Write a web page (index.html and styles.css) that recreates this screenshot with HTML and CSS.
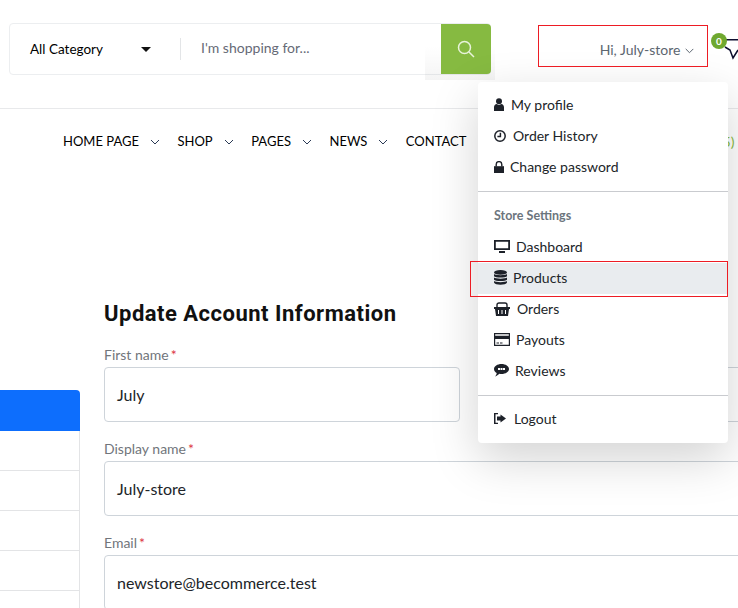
FILE: index.html
```html
<!DOCTYPE html>
<html lang="en">
<head>
<title>Update Account Information</title>
<meta charset="utf-8">
<link rel="stylesheet" href="styles.css">
</head>
<body>

<header class="topbar">
	<form class="search">
		<div class="search-cat"><span>All Category</span><i class="caret"></i></div>
		<div class="search-text">I'm shopping for...</div>
		<div class="search-shade"></div>
		<button class="search-btn" type="button">
			<svg width="18" height="18" viewBox="0 0 18 18" fill="none" stroke="#e8f3da" stroke-width="1.5"><circle cx="7.5" cy="7.5" r="6"/><path d="M12 12l5 5"/></svg>
		</button>
	</form>
	<div class="account">
		<a class="hi" href="#">Hi, July-store
			<svg width="9" height="6" viewBox="0 0 9 6" fill="none" stroke="#5c6670"><path d="M.7.9l3.800 3.800L8.300.9"/></svg>
		</a>
		<div class="cart">
			<svg width="26" height="26" viewBox="0 0 26 26" fill="none" stroke="#0d0d2e" stroke-width="1.5"><path d="M7 .8h19M6 8l5 3 3 8 5-8"/></svg>
			<span class="cart-count">0</span>
		</div>
	</div>
</header>

<nav class="mainnav">
	<a href="#">HOME PAGE<svg class="chev" width="10" height="6" viewBox="0 0 10 6"><path d="M1 1l4 4 4-4"/></svg></a>
	<a href="#">SHOP<svg class="chev" width="10" height="6" viewBox="0 0 10 6"><path d="M1 1l4 4 4-4"/></svg></a>
	<a href="#">PAGES<svg class="chev" width="10" height="6" viewBox="0 0 10 6"><path d="M1 1l4 4 4-4"/></svg></a>
	<a href="#">NEWS<svg class="chev" width="10" height="6" viewBox="0 0 10 6"><path d="M1 1l4 4 4-4"/></svg></a>
	<a href="#">CONTACT</a>
	<span class="hotline">(5) $0.00</span>
</nav>

<main class="content">
	<aside class="sidebar">
		<div class="side-active"></div>
		<div class="side-row"></div>
		<div class="side-row"></div>
		<div class="side-row"></div>
		<div class="side-row"></div>
		<div class="side-row"></div>
	</aside>
	<section class="account-form">
		<h1>Update Account Information</h1>
		<div class="field-row">
			<div class="field short">
				<label>First name<em>*</em></label>
				<div class="input">July</div>
			</div>
			<div class="field">
				<label></label>
				<div class="input"></div>
			</div>
		</div>
		<div class="field">
			<label>Display name<em>*</em></label>
			<div class="input">July-store</div>
		</div>
		<div class="field">
			<label>Email<em>*</em></label>
			<div class="input">newstore@becommerce.test</div>
		</div>
	</section>
</main>

<div class="menu">
	<div class="menu-group">
		<a href="#"><svg width="10" height="13" viewBox="0 0 10 13" fill="#1d2129"><circle cx="5" cy="3.200" r="3"/><path d="M0 13V9.200C0 7.500 1.300 6.400 2.600 6.100 4 7.200 6 7.200 7.400 6.100 8.700 6.400 10 7.500 10 9.200V13z"/></svg>My profile</a>
		<a href="#"><svg width="12" height="12" viewBox="0 0 12 12" fill="none" stroke="#1d2129" stroke-width="1.500"><circle cx="6" cy="6" r="5.200"/><path d="M6.400 2.800v3.600H3.400"/></svg>Order History</a>
		<a href="#" class="gap-s"><svg width="10" height="12" viewBox="0 0 10 12" fill="#1d2129"><path d="M0 5.200h10V12H0z"/><path d="M2.200 5.500V3.400a2.800 2.800 0 015.600 0v2.100" fill="none" stroke="#1d2129" stroke-width="1.400"/></svg>Change password</a>
	</div>
	<div class="menu-group">
		<div class="menu-title">Store Settings</div>
		<a href="#" class="gap-s"><svg width="16" height="13" viewBox="0 0 16 13" fill="#1d2129"><path d="M0 0h16v10H0zM1.800 1.800v6.400h12.400V1.800zM5 11h6v2H5z" fill-rule="evenodd"/></svg>Dashboard</a>
		<a href="#" class="on gap-s"><svg width="13" height="15" viewBox="0 0 13 15" fill="#1d2129"><ellipse cx="6.500" cy="2.400" rx="6.500" ry="2.400"/><path d="M0 4c1 1.500 12 1.500 13 0v2.200C12 8 1 8 0 6.200zM0 7.500c1 1.500 12 1.500 13 0v2.200c-1 1.800-12 1.800-13 0zM0 11c1 1.500 12 1.500 13 0v1.600C12 15.500 1 15.500 0 12.600z"/></svg>Products</a>
		<a href="#"><svg width="16" height="14" viewBox="0 0 16 14" fill="#1d2129"><path d="M0 5h16v2h-1l-1 7H2L1 7H0zM4 8v4h1V8zm3.500 0v4h1V8zM11 8v4h1V8z" fill-rule="evenodd"/><path d="M3 5.500V3a2 2 0 012-2h6a2 2 0 012 2v2.500" fill="none" stroke="#1d2129" stroke-width="1.400"/></svg>Orders</a>
		<a href="#" class="gap-s"><svg width="16" height="13" viewBox="0 0 16 13" fill="#1d2129"><path d="M0 0h16v13H0zM1.200 1.200v1.600h13.600V1.200zM1.200 6v5.800h13.600V6zM2.500 9.500h2.500v1H2.500zM6 9.500h2.500v1H6z" fill-rule="evenodd"/></svg>Payouts</a>
		<a href="#" class="gap-s"><svg width="15" height="13" viewBox="0 0 15 13" fill="#1d2129"><path fill-rule="evenodd" d="M7.500 0C11.600 0 15 2.200 15 5s-3.400 5-7.500 5c-.8 0-1.500-.1-2.200-.2C4.300 11 2.800 12 1 12.500 2 11.500 2.600 10.300 2.700 9 1 8 0 6.600 0 5 0 2.200 3.400 0 7.500 0zM4 4v2h2V4zm2.500 0v2h2V4zM9 4v2h2V4z"/></svg>Reviews</a>
	</div>
	<div class="menu-group last">
		<a href="#" class="gap-l"><svg width="12" height="11" viewBox="0 0 12 11" fill="#1d2129"><path d="M4 0v1.300H1.500v8.400H4V11H0V0z"/><path d="M6.500 1.500L12 5.500l-5.500 4V7.500H3v-4h3.500z"/></svg>Logout</a>
	</div>
</div>

<div class="marker marker-hi"></div>
<div class="marker marker-products"></div>

</body>
</html>
```

FILE: styles.css
```css
html, body {
	margin: 0;
	padding: 0;
}

body {
	position: relative;
	width: 738px;
	height: 608px;
	overflow: hidden;
	background-color: #fff;
	font-family: Lato, sans-serif;
	color: #1d2129;
}

a {
	color: inherit;
	text-decoration: none;
}

.topbar {
	display: flex;
	height: 109px;
	box-sizing: border-box;
	padding: 23px 0 0 9px;
	border-bottom: 1px solid #e8e9eb;
}

.search {
	position: relative;
	display: flex;
	flex-shrink: 0;
	width: 482px;
	height: 52px;
	box-sizing: border-box;
	border: 1px solid #eceef0;
	border-radius: 4px;
	margin: 0;
}

.search-cat {
	display: flex;
	align-items: center;
	justify-content: space-between;
	width: 170px;
	box-sizing: border-box;
	padding: 0 29px 1px 20px;
	font-size: 13.500px;
	color: #000;
}

.caret {
	width: 0;
	height: 0;
	border: 5px solid transparent;
	border-top: 5px solid #111;
	border-bottom: 0;
	margin-top: 2px;
}

.search-text {
	flex: 1;
	align-self: center;
	height: 22px;
	line-height: 20px;
	padding-left: 20px;
	border-left: 1px solid #e3e5e7;
	font-size: 14px;
	color: #666a76;
}

/* grey patch the dropdown shadow leaves round the button */
.search-shade {
	position: absolute;
	top: -1px;
	left: 415px;
	width: 70px;
	height: 57px;
	background: linear-gradient(rgba(0, 0, 0, 0) 40%, rgba(0, 0, 0, .045));
}

.search-btn {
	position: relative;
	display: flex;
	align-items: center;
	justify-content: center;
	width: 50px;
	margin: 0 -1px 0 0;
	padding: 0;
	border: 0;
	border-radius: 0 4px 4px 0;
	background-color: #86ba41;
}

.account {
	display: flex;
	flex: 1;
	padding-left: 47px;
}

.hi {
	display: block;
	flex-shrink: 0;
	width: 169px;
	height: 41px;
	line-height: 50px;
	box-sizing: border-box;
	text-align: right;
	padding-right: 13px;
	font-size: 14px;
	color: #5c6670;
	margin-top: 2px;
}

.hi svg {
	margin-left: 1px;
	vertical-align: 1px;
}

.cart {
	position: relative;
	flex-shrink: 0;
	margin: 16px 0 0 12px;
}

.cart-count {
	position: absolute;
	top: -6px;
	left: -8px;
	width: 16px;
	height: 16px;
	line-height: 16px;
	border-radius: 50%;
	background-color: #6fa82f;
	color: #fff;
	font-size: 10px;
	font-weight: 700;
	text-align: center;
}

.mainnav {
	display: flex;
	padding: 24px 0 0 63px;
	font-size: 13px;
	line-height: 17px;
	color: #000;
	white-space: nowrap;
}

.mainnav a {
	display: flex;
	align-items: center;
	margin-right: 17.500px;
}

.chev {
	margin-left: 11px;
	fill: none;
	stroke: #2b3a55;
}

.hotline {
	margin-left: 235px;
	font-size: 14px;
	color: #86ba41;
}

.content {
	display: flex;
	padding-top: 145px;
}

.sidebar {
	flex-shrink: 0;
	width: 80px;
	padding-top: 95px;
	box-sizing: border-box;
}

.side-active {
	height: 41px;
	background-color: #0d6efd;
	border-top-right-radius: 4px;
}

.side-row {
	height: 40px;
	box-sizing: border-box;
	border-right: 1px solid #e3e4e6;
	border-bottom: 1px solid #e3e4e6;
}

.account-form {
	width: 720px;
	flex-shrink: 0;
	margin-left: 24px;
}

h1 {
	margin: 6px 0 18px;
	font-family: Roboto, sans-serif;
	font-size: 22px;
	line-height: 26px;
	font-weight: 700;
	letter-spacing: .5px;
	color: #111;
}

.field-row {
	display: flex;
	gap: 18px;
}

.field-row .field {
	flex: 1;
}

.field {
	margin-bottom: 17px;
}

.field label {
	display: block;
	height: 20px;
	font-size: 14px;
	line-height: 20px;
	color: #71757b;
	margin-bottom: 2px;
}

.field em {
	color: #dc3545;
	font-style: normal;
	margin-left: 2px;
}

.input {
	height: 55px;
	box-sizing: border-box;
	line-height: 53px;
	padding-left: 12px;
	border: 1px solid #ced4da;
	border-radius: 4px;
	font-size: 16px;
	color: #212529;
}

.field-row .field.short {
	flex: none;
	width: 356px;
}

/* dropdown */
.menu {
	position: absolute;
	top: 82px;
	left: 478px;
	width: 250px;
	background-color: #fff;
	border-radius: 4px;
	box-shadow: 0 16px 48px rgba(0, 0, 0, .175);
	font-size: 14px;
	color: #212529;
}

.menu-group {
	padding: 8px 0;
	border-bottom: 1px solid #c9cbcf;
}

.menu-group.last {
	border-bottom: 0;
}

.menu-group a {
	display: flex;
	align-items: center;
	height: 31px;
	box-sizing: border-box;
	padding: 0 0 2px 16px;
}

.menu-group a svg {
	margin-right: 7px;
}

.menu-group a.gap-s svg { margin-right: 6px; }
.menu-group a.gap-l svg { margin-right: 8px; }

.menu-group a.on {
	background-color: #e9ecef;
}

.menu-title {
	padding: 8px 16px;
	height: 16px;
	line-height: 16px;
	font-size: 12.500px;
	font-weight: 700;
	color: #6c757d;
}

.marker {
	position: absolute;
	box-sizing: border-box;
	border: 1px solid #ed1c24;
}

.marker-hi {
	top: 25px;
	left: 538px;
	width: 170px;
	height: 42px;
}

.marker-products {
	top: 261px;
	left: 470px;
	width: 258px;
	height: 36px;
}
```
